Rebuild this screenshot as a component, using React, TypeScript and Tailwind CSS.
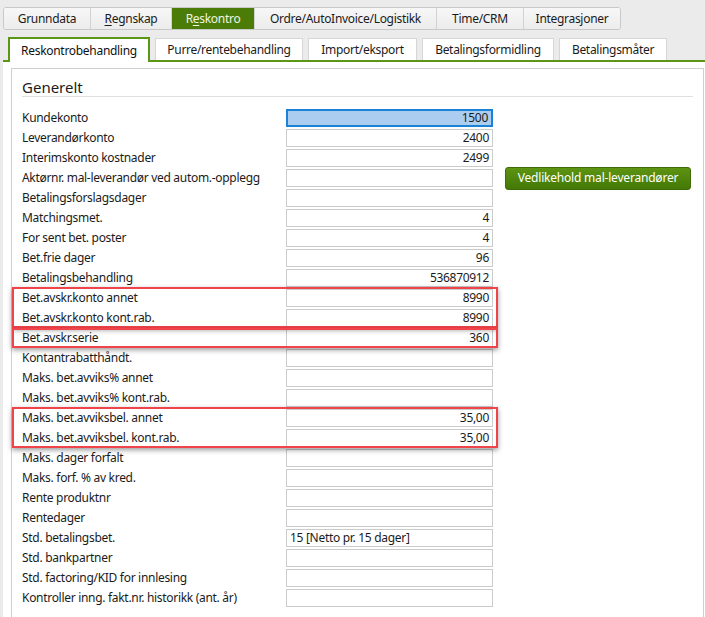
import React from "react";

const topTabs = [
  { label: "Grunndata", w: "w-[86px]" },
  { label: "Regnskap", w: "w-[81px]", key: 0 },
  { label: "Reskontro", w: "w-[83px]", key: 1, active: true },
  { label: "Ordre/AutoInvoice/Logistikk", w: "w-[182px]" },
  { label: "Time/CRM", w: "w-[87px]" },
  { label: "Integrasjoner", w: "w-[97px]" },
];

const subTabs = [
  { label: "Purre/rentebehandling", w: "w-[148px]" },
  { label: "Import/eksport", w: "w-[109px]" },
  { label: "Betalingsformidling", w: "w-[132px]" },
  { label: "Betalingsmåter", w: "w-[108px]" },
];

const rows: { label: string; value?: string; left?: boolean }[] = [
  { label: "Kundekonto", value: "1500" },
  { label: "Leverandørkonto", value: "2400" },
  { label: "Interimskonto kostnader", value: "2499" },
  { label: "Aktørnr. mal-leverandør ved autom.-opplegg" },
  { label: "Betalingsforslagsdager" },
  { label: "Matchingsmet.", value: "4" },
  { label: "For sent bet. poster", value: "4" },
  { label: "Bet.frie dager", value: "96" },
  { label: "Betalingsbehandling", value: "536870912" },
  { label: "Bet.avskr.konto annet", value: "8990" },
  { label: "Bet.avskr.konto kont.rab.", value: "8990" },
  { label: "Bet.avskr.serie", value: "360" },
  { label: "Kontantrabatthåndt." },
  { label: "Maks. bet.avviks% annet" },
  { label: "Maks. bet.avviks% kont.rab." },
  { label: "Maks. bet.avviksbel. annet", value: "35,00" },
  { label: "Maks. bet.avviksbel. kont.rab.", value: "35,00" },
  { label: "Maks. dager forfalt" },
  { label: "Maks. forf. % av kred." },
  { label: "Rente produktnr" },
  { label: "Rentedager" },
  { label: "Std. betalingsbet.", value: "15 [Netto pr. 15 dager]", left: true },
  { label: "Std. bankpartner" },
  { label: "Std. factoring/KID for innlesing" },
  { label: "Kontroller inng. fakt.nr. historikk (ant. år)" },
];

const TabLabel = ({ label, keyIdx }: { label: string; keyIdx?: number }) => {
  if (keyIdx === undefined) return <>{label}</>;
  return (
    <>
      {label.slice(0, keyIdx)}
      <span className="underline underline-offset-2">{label[keyIdx]}</span>
      {label.slice(keyIdx + 1)}
    </>
  );
};

export default function App() {
  return (
    <div
      className="w-[705px] h-[617px] overflow-hidden bg-[#ebebeb] text-[12px] tracking-[-0.3px] text-[#1b1b1b]"
      style={{ fontFamily: '"Noto Sans", "Open Sans", sans-serif' }}
    >
      {/* Main tabs */}
      <div className="flex pl-[3px] pt-[7px]">
        <div className="flex h-[23px] rounded-[3px] border border-[#c9c9c9] bg-[#f2f2f2] overflow-hidden">
          {topTabs.map((t, i) => (
            <div
              key={t.label}
              className={`${t.w} flex items-center justify-center ${i > 0 ? "border-l border-[#d2d2d2]" : ""} ${
                t.active ? "bg-[#4a7c07] text-[#eef5e4]" : "bg-gradient-to-b from-[#f7f7f7] to-[#ececec]"
              }`}
            >
              <TabLabel label={t.label} keyIdx={t.key} />
            </div>
          ))}
        </div>
      </div>

      {/* Sub tabs */}
      <div className="mt-[7px] ml-[3px] flex items-end gap-[5px] border-b-2 border-[#5b9714] pl-[5px] h-[25px]">
        <div className="w-[142px] h-[25px] -mb-[2px] border-2 border-b-0 border-[#5b9714] bg-white flex items-center justify-center text-[#111]">
          Reskontrobehandling
        </div>
        {subTabs.map((t) => (
          <div
            key={t.label}
            className={`${t.w} h-[22px] border border-b-0 border-[#d6d6d6] bg-white flex items-center justify-center`}
          >
            {t.label}
          </div>
        ))}
      </div>

      {/* Panel */}
      <div className="ml-[3px] bg-white h-[560px] pl-[8px] pt-[6px]">
        <div className="h-full w-[693px] border border-[#cfcfcf] border-b-0 pl-[10px] pt-[8px]">
          <div className="h-[20px] mr-[10px] border-b border-[#e0e0e0] text-[15px] leading-[20px] tracking-normal">
            Generelt
          </div>

          <div className="relative mt-[11px]">
            {rows.map((r, i) => (
              <div key={r.label} className="flex h-[20px] items-center">
                <div className="w-[264px] whitespace-nowrap">{r.label}</div>
                <div
                  className={`w-[207px] h-[18px] flex items-center px-[3px] ${
                    i === 0 ? "border-2 border-[#1b82d6] bg-[#abcdef]" : "border border-[#cbcbcb] bg-white"
                  } ${r.left ? "justify-start" : "justify-end"}`}
                >
                  {r.value}
                </div>
                {i === 3 && (
                  <button className="ml-[12px] w-[186px] h-[23px] rounded-[3px] border border-[#3f6c08] bg-gradient-to-b from-[#5d9412] to-[#437806] text-white text-[12px] tracking-[-0.2px]">
                    Vedlikehold mal-leverandører
                  </button>
                )}
              </div>
            ))}

            {/* Highlight boxes */}
            <div className="absolute left-[-10px] top-[179px] w-[486px] h-[41px] border-[2.5px] border-[#f0434a] shadow-[0_2px_5px_rgba(0,0,0,0.4)]" />
            <div className="absolute left-[-10px] top-[220px] w-[486px] h-[20px] border-[2.5px] border-[#f0434a] shadow-[0_2px_5px_rgba(0,0,0,0.4)]" />
            <div className="absolute left-[-10px] top-[299px] w-[486px] h-[41px] border-[2.5px] border-[#f0434a] shadow-[0_2px_5px_rgba(0,0,0,0.4)]" />
          </div>
        </div>
      </div>
    </div>
  );
}
